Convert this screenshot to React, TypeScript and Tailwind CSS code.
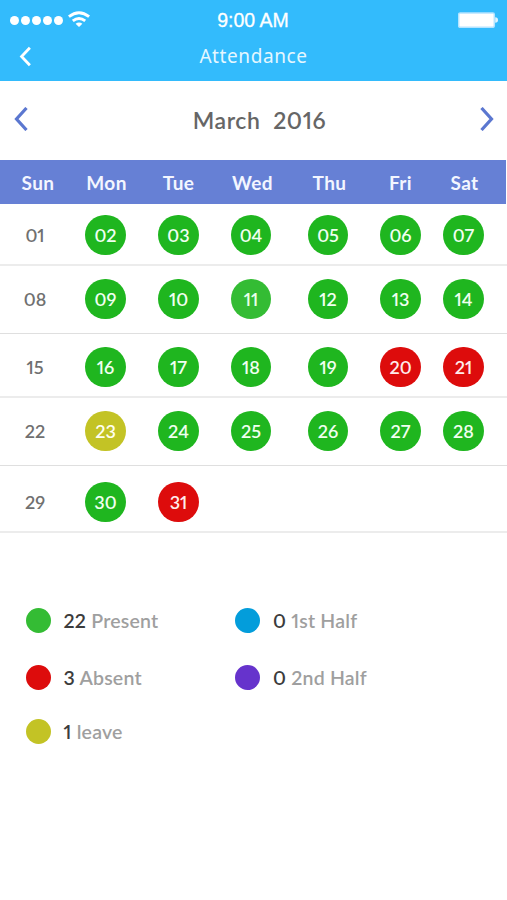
import { ReactNode } from 'react';

type Status = 'present' | 'presentLight' | 'absent' | 'leave' | 'firstHalf' | 'secondHalf' | 'none';

const statusColor: Record<Status, string> = {
  present: 'bg-[#1fb61f] text-[#f0fff0]',
  presentLight: 'bg-[#34bc34] text-[#eaffea]',
  absent: 'bg-[#dd0c0c] text-[#ffecec]',
  leave: 'bg-[#c3c325] text-[#fffff0]',
  firstHalf: 'bg-[#039ddb]',
  secondHalf: 'bg-[#6633cc]',
  none: 'text-[#707070]',
};

const columns = 'grid grid-cols-[70px_71px_75px_70px_84px_61px_65px]';

const weekdays = [
  { label: 'Sun', className: 'pl-1.5' },
  { label: 'Mon', className: 'pl-0.5' },
  { label: 'Tue', className: '' },
  { label: 'Wed', className: 'pl-[3px]' },
  { label: 'Thu', className: 'pl-[3px]' },
  { label: 'Fri', className: '' },
  { label: 'Sat', className: 'pl-0.5' },
];

const weeks = [
  { start: 1, days: 7, className: 'h-[62px] pt-[10.5px] border-b-2 border-[#ececec]' },
  { start: 8, days: 7, className: 'h-[68px] pt-[12.5px] border-b border-[#dfdfdf]' },
  { start: 15, days: 7, className: 'h-16 pt-[12.5px] border-b-2 border-[#ececec]' },
  { start: 22, days: 7, className: 'h-[68px] pt-[12.5px] border-b border-[#dfdfdf]' },
  { start: 29, days: 3, className: 'h-[67px] pt-[15.5px] border-b-2 border-[#ececec]' },
];

function getStatus(day: number): Status {
  if (day % 7 === 1) return 'none';
  if (day === 11) return 'presentLight';
  if (day === 23) return 'leave';
  if ([20, 21, 31].includes(day)) return 'absent';
  return 'present';
}

function Chevron({ points, className }: { points: string; className: string }) {
  return (
    <svg viewBox="0 0 14 24" className={className} fill="none" stroke="currentColor" strokeWidth="3.2">
      <polyline points={points} />
    </svg>
  );
}

function StatusBar() {
  return (
    <div className="grid grid-cols-3 items-center h-10 pl-[10px] pr-[9px]">
      <div className="flex items-center gap-[2px]">
        {[0, 1, 2, 3, 4].map((i) => (
          <span key={i} className="size-[9px] rounded-full bg-white" />
        ))}
        <svg viewBox="0 0 22 16" className="w-[22px] h-4 ml-[3px] -mt-[2px]" fill="none" stroke="white" strokeWidth="2.9">
          <path d="M0.9 5.7 Q11 -2.4 21.1 5.7" />
          <path d="M4.8 9.9 Q11 5 17.2 9.9" />
          <path d="M11 16 L7.6 12.8 Q11 10 14.4 12.8 Z" fill="white" stroke="none" />
        </svg>
      </div>
      <span className="justify-self-center whitespace-nowrap pt-[2px] pr-[2px] font-['Liberation_Sans',sans-serif] text-[19.5px] text-white [-webkit-text-stroke:0.3px_white]">
        9:00 AM
      </span>
      <svg viewBox="0 0 40 16" className="justify-self-end w-10 h-4">
        <rect x="0.7" y="0.9" width="35.6" height="14.4" rx="1.5" fill="white" stroke="#b5e4ff" strokeWidth="1.5" />
        <path d="M37.2 5.2 a2.8 2.8 0 0 1 0 5.6 Z" fill="#e0f4ff" />
      </svg>
    </div>
  );
}

function LegendItem({ status, count, children }: { status: Status; count: number; children: ReactNode }) {
  return (
    <div className="flex items-center h-[25px]">
      <span className={`size-[25px] rounded-full ${statusColor[status]}`} />
      <p className="ml-[13px] text-[19.5px] leading-[25px] font-semibold tracking-[0.2px] proportional-nums text-[#9f9f9f] whitespace-nowrap">
        <span className="text-[#3c3c3c]">{count}</span> {children}
      </p>
    </div>
  );
}

export default function App() {
  return (
    <main className="w-full h-[900px] bg-white overflow-hidden font-['Lato',sans-serif]">
      <header className="h-[81px] bg-[#33bbfc] text-white">
        <StatusBar />
        <div className="grid grid-cols-[1fr_auto_1fr] h-[33px] items-center">
          <button className="ml-[19px] w-3.5">
            <Chevron points="12,2 2.5,12 12,22" className="w-[13px] h-[21px]" />
          </button>
          <h1 className="font-['Noto_Sans',sans-serif] text-[19px] leading-6 tracking-[0.6px] -mt-[2px] text-[#e5f7ff]">Attendance</h1>
        </div>
      </header>

      <div className="flex items-center justify-between h-[79px] pl-[13px] pr-3 pb-[3px] text-[#5b77d0]">
        <Chevron points="13,1 3,12 13,23" className="w-[15px] h-6" />
        <h2 className="text-[23px] pt-[3px] pl-[11px] font-semibold tracking-[0.6px] proportional-nums text-[#666666] whitespace-pre">March  2016</h2>
        <Chevron points="1,1 11,12 1,23" className="w-[15px] h-6" />
      </div>

      <div className={`${columns} w-[506px] h-11 pt-0.5 items-center bg-[#6680d5] text-[19px] font-bold tracking-[0.4px] text-[#f3f6ff]`}>
        {weekdays.map((d) => (
          <span key={d.label} className={`text-center ${d.className}`}>{d.label}</span>
        ))}
      </div>

      {weeks.map((week) => (
        <div key={week.start} className={`${columns} justify-items-center ${week.className}`}>
          {Array.from({ length: week.days }, (_, i) => week.start + i).map((day) => (
            <span
              key={day}
              className={`flex items-center justify-center size-[40.5px] pt-px rounded-full text-[18px] font-semibold proportional-nums ${statusColor[getStatus(day)]}`}
            >
              {String(day).padStart(2, '0')}
            </span>
          ))}
        </div>
      ))}

      {/* Totals */}
      <section className="flex pt-[75px] pl-[25.5px]">
        <div className="w-[209.5px]">
          <LegendItem status="presentLight" count={22}>Present</LegendItem>
          <div className="mt-8"><LegendItem status="absent" count={3}>Absent</LegendItem></div>
          <div className="mt-[29px]"><LegendItem status="leave" count={1}>leave</LegendItem></div>
        </div>
        <div>
          <LegendItem status="firstHalf" count={0}>1st Half</LegendItem>
          <div className="mt-8"><LegendItem status="secondHalf" count={0}>2nd Half</LegendItem></div>
        </div>
      </section>
    </main>
  );
}
